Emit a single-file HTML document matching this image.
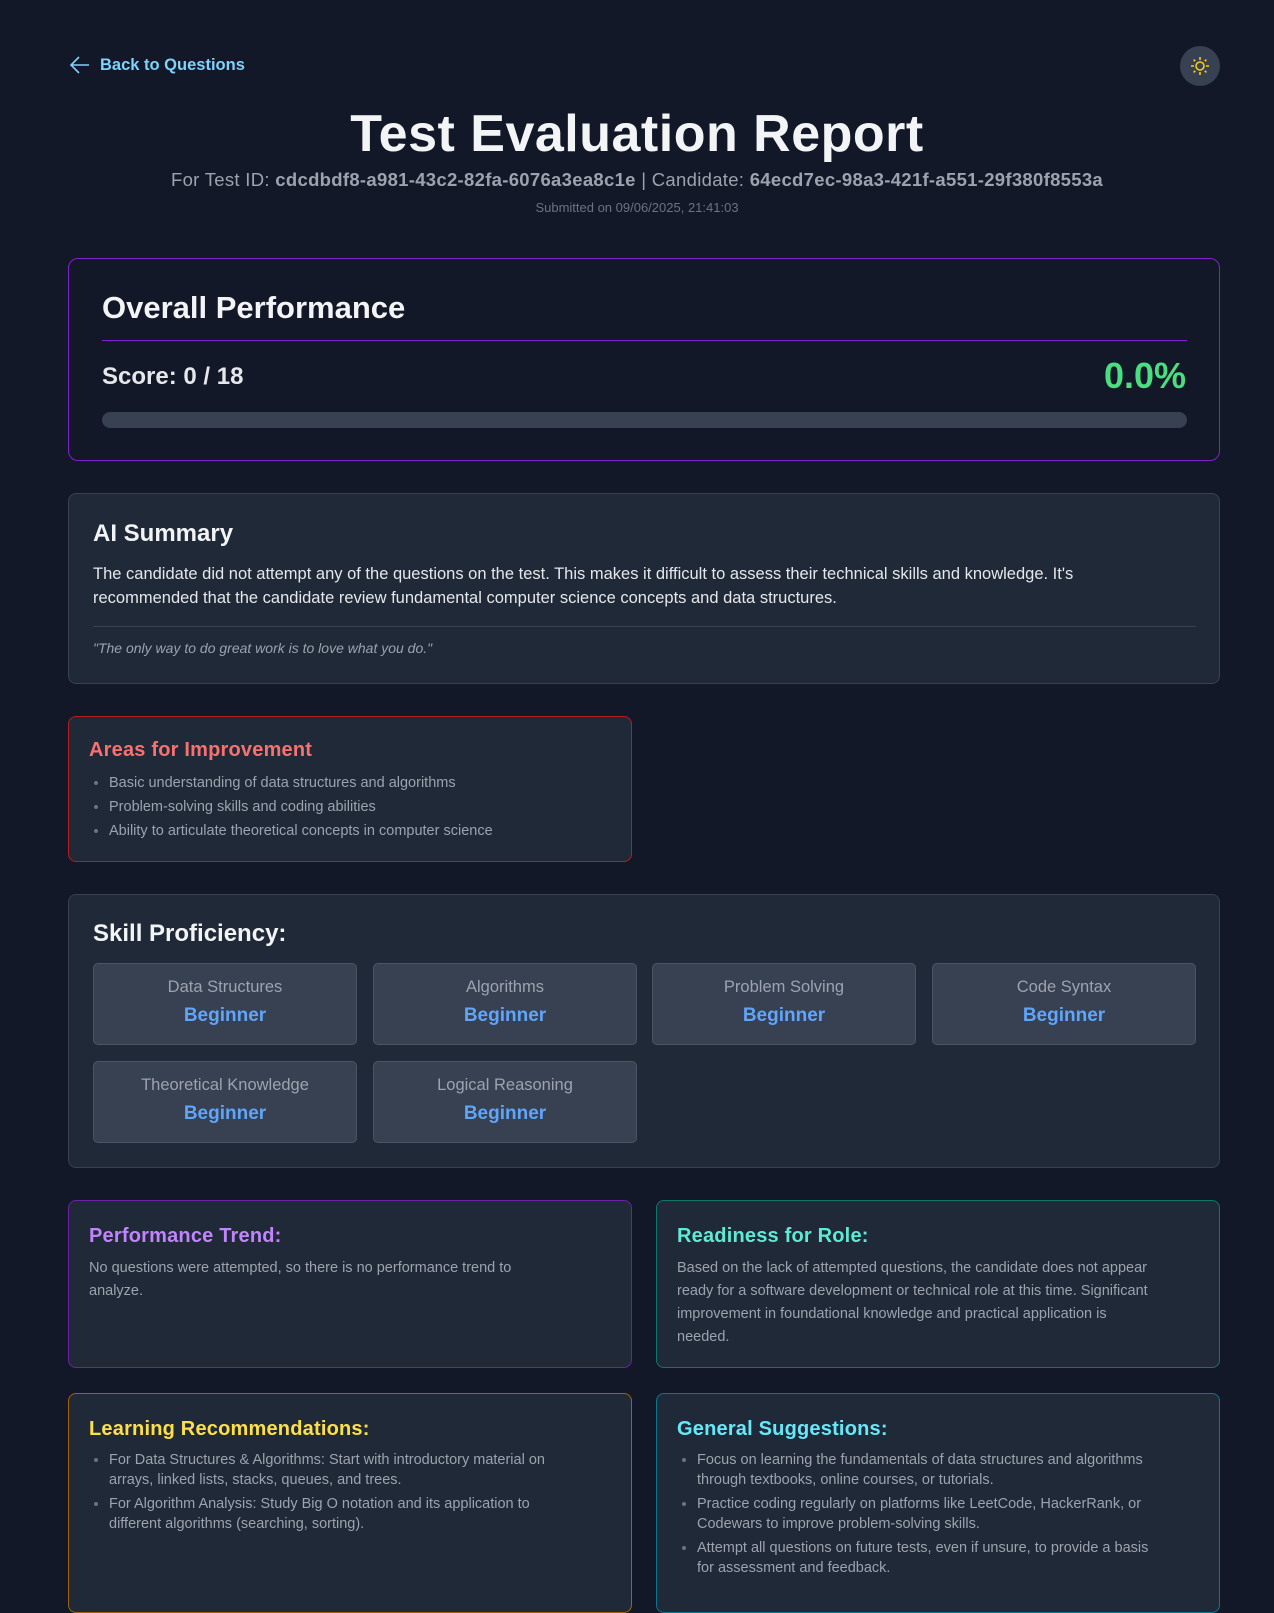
<!DOCTYPE html>
<html><head><meta charset="utf-8"><style>
*{box-sizing:border-box;margin:0;padding:0}
body{width:1274px;height:1588px;background:#121827;font-family:"Liberation Sans",sans-serif;color:#f3f4f6;position:relative;overflow:hidden}
.a{position:absolute}
.card{position:absolute;background:#1f2937;border:1px solid #374151;border-radius:8px}
h3{font-size:20px;font-weight:bold;letter-spacing:0.2px}
ul{list-style:disc;padding-left:20px;color:#9ca3af;font-size:14.5px;line-height:20px;white-space:nowrap}
ul li{margin-bottom:4px}
ul li::marker{color:#6b7280}
.sk{position:absolute;width:264px;height:82px;background:#374151;border:1px solid #4b5563;border-radius:5px;text-align:center}
.sk .n{color:#9ca3af;font-size:16.5px;margin-top:14px}
.sk .l{color:#60a5fa;font-size:19px;font-weight:bold;margin-top:8px}
p.t{color:#9ca3af;font-size:14.5px;line-height:23px;white-space:nowrap}
</style></head><body>
<div class="a" style="left:69px;top:55px;display:flex;align-items:center;color:#7dd3fc;font-size:16.5px;font-weight:bold">
<svg width="22" height="20" viewBox="0 0 22 20" fill="none" stroke="#7dd3fc" stroke-width="1.6"><path d="M20 10H2M10 2L2 10L10 18"/></svg>
<span style="margin-left:9px">Back to Questions</span></div>
<div class="a" style="left:1180px;top:46px;width:40px;height:40px;border-radius:50%;background:#374151">
<svg width="40" height="40" viewBox="0 0 40 40" fill="none" stroke="#facc15" stroke-width="1.6"><circle cx="20" cy="20" r="4"/><path d="M20 11v3M20 26v3M11 20h3M26 20h3M13.6 13.6l1.6 1.6M24.8 24.8l1.6 1.6M13.6 26.4l1.6-1.6M24.8 15.2l1.6-1.6"/></svg></div>
<div class="a" style="left:0;width:1274px;top:104px;text-align:center;font-size:52px;font-weight:bold;color:#f3f4f6;letter-spacing:0.5px">Test Evaluation Report</div>
<div class="a" style="left:0;width:1274px;top:169px;text-align:center;font-size:18.5px;color:#9ca3af;letter-spacing:0.3px">For Test ID: <b>cdcdbdf8-a981-43c2-82fa-6076a3ea8c1e</b> | Candidate: <b>64ecd7ec-98a3-421f-a551-29f380f8553a</b></div>
<div class="a" style="left:0;width:1274px;top:200px;text-align:center;font-size:13px;color:#6b7280">Submitted on 09/06/2025, 21:41:03</div>

<div class="a" style="left:68px;top:258px;width:1152px;height:203px;border:1px solid #7e22ce;border-radius:10px">
<div class="a" style="left:33px;top:31px;font-size:31px;font-weight:bold">Overall Performance</div>
<div class="a" style="left:33px;top:81px;width:1085px;height:1px;background:#7e22ce"></div>
<div class="a" style="left:33px;top:104px;font-size:24px;font-weight:bold;color:#e5e7eb">Score: 0 / 18</div>
<div class="a" style="right:33px;top:96px;font-size:36px;font-weight:bold;color:#4ade80">0.0%</div>
<div class="a" style="left:33px;top:153px;width:1085px;height:16px;border-radius:8px;background:#374151"></div>
</div>

<div class="card" style="left:68px;top:493px;width:1152px;height:191px">
<div class="a" style="left:24px;top:26px;font-size:24px;font-weight:bold">AI Summary</div>
<div class="a" style="left:24px;top:68px;width:1120px;font-size:16.5px;line-height:24px;color:#e5e7eb;white-space:nowrap">The candidate did not attempt any of the questions on the test. This makes it difficult to assess their technical skills and knowledge. It's<br>recommended that the candidate review fundamental computer science concepts and data structures.</div>
<div class="a" style="left:24px;top:132px;width:1103px;height:1px;background:#374151"></div>
<div class="a" style="left:24px;top:146px;font-size:14px;font-style:italic;color:#9ca3af">"The only way to do great work is to love what you do."</div>
</div>

<div class="card" style="left:68px;top:716px;width:564px;height:146px;border-color:#b91c1c">
<h3 class="a" style="left:20px;top:22px;color:#f87171">Areas for Improvement</h3>
<ul class="a" style="left:20px;top:56px"><li>Basic understanding of data structures and algorithms</li><li>Problem-solving skills and coding abilities</li><li>Ability to articulate theoretical concepts in computer science</li></ul>
</div>

<div class="card" style="left:68px;top:894px;width:1152px;height:274px">
<div class="a" style="left:24px;top:25px;font-size:24px;font-weight:bold">Skill Proficiency:</div>
<div class="sk" style="left:24px;top:68px"><div class="n">Data Structures</div><div class="l">Beginner</div></div>
<div class="sk" style="left:304px;top:68px"><div class="n">Algorithms</div><div class="l">Beginner</div></div>
<div class="sk" style="left:583px;top:68px"><div class="n">Problem Solving</div><div class="l">Beginner</div></div>
<div class="sk" style="left:863px;top:68px"><div class="n">Code Syntax</div><div class="l">Beginner</div></div>
<div class="sk" style="left:24px;top:166px"><div class="n">Theoretical Knowledge</div><div class="l">Beginner</div></div>
<div class="sk" style="left:304px;top:166px"><div class="n">Logical Reasoning</div><div class="l">Beginner</div></div>
</div>

<div class="card" style="left:68px;top:1200px;width:564px;height:168px;border-color:#6b21a8">
<h3 class="a" style="left:20px;top:24px;color:#c084fc">Performance Trend:</h3>
<p class="t a" style="left:20px;top:56px">No questions were attempted, so there is no performance trend to<br>analyze.</p>
</div>
<div class="card" style="left:656px;top:1200px;width:564px;height:168px;border-color:#0f766e">
<h3 class="a" style="left:20px;top:24px;color:#5eead4">Readiness for Role:</h3>
<p class="t a" style="left:20px;top:56px">Based on the lack of attempted questions, the candidate does not appear<br>ready for a software development or technical role at this time. Significant<br>improvement in foundational knowledge and practical application is<br>needed.</p>
</div>

<div class="card" style="left:68px;top:1393px;width:564px;height:220px;border-color:#a16207">
<h3 class="a" style="left:20px;top:24px;color:#fde047">Learning Recommendations:</h3>
<ul class="a" style="left:20px;top:56px"><li>For Data Structures &amp; Algorithms: Start with introductory material on<br>arrays, linked lists, stacks, queues, and trees.</li><li>For Algorithm Analysis: Study Big O notation and its application to<br>different algorithms (searching, sorting).</li></ul>
</div>
<div class="card" style="left:656px;top:1393px;width:564px;height:220px;border-color:#0e7490">
<h3 class="a" style="left:20px;top:24px;color:#67e8f9">General Suggestions:</h3>
<ul class="a" style="left:20px;top:56px"><li>Focus on learning the fundamentals of data structures and algorithms<br>through textbooks, online courses, or tutorials.</li><li>Practice coding regularly on platforms like LeetCode, HackerRank, or<br>Codewars to improve problem-solving skills.</li><li>Attempt all questions on future tests, even if unsure, to provide a basis<br>for assessment and feedback.</li></ul>
</div>
</body></html>
